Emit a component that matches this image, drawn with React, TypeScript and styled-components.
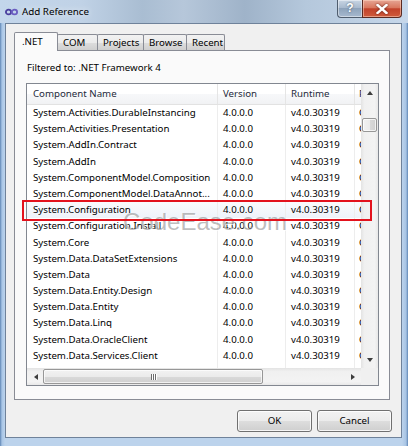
import React from 'react';
import styled, {createGlobalStyle} from 'styled-components';

const GlobalStyle = createGlobalStyle`
    html, body {
        margin: 0;
        padding: 0;
        background: #ffffff;
    }
    body {
        font-family: "Noto Sans", "Liberation Sans", sans-serif;
        font-size: 9.7px;
        color: #000;
    }
`;

const tabs = [
    {label: '.NET', width: 44},
    {label: 'COM', width: 41},
    {label: 'Projects', width: 47},
    {label: 'Browse', width: 44},
    {label: 'Recent', width: 39},
];

const components = [
    'System.Activities.DurableInstancing',
    'System.Activities.Presentation',
    'System.AddIn.Contract',
    'System.AddIn',
    'System.ComponentModel.Composition',
    'System.ComponentModel.DataAnnot...',
    'System.Configuration',
    'System.Configuration.Install',
    'System.Core',
    'System.Data.DataSetExtensions',
    'System.Data',
    'System.Data.Entity.Design',
    'System.Data.Entity',
    'System.Data.Linq',
    'System.Data.OracleClient',
    'System.Data.Services.Client',
    'System.Data.Services.Design',
];

export default function App() {
    return (
        <>
            <GlobalStyle/>
            <Window>
                <TitleBar>
                    <AppIcon width="13" height="8" viewBox="0 0 13 8">
                        <ellipse cx="3.5" cy="4" rx="2.6" ry="2.4" fill="none" stroke="#4b3f9e" strokeWidth="1.8"/>
                        <ellipse cx="9.5" cy="4" rx="2.6" ry="2.4" fill="none" stroke="#6a5cc0" strokeWidth="1.8"/>
                    </AppIcon>
                    <Title>Add Reference</Title>
                    <CaptionButtons>
                        <HelpButton>?</HelpButton>
                        <CloseButton>
                            <svg width="12" height="10" viewBox="0 0 12 10">
                                <path d="M1.5 1 L10.5 9 M10.5 1 L1.5 9" stroke="#fff" strokeWidth="2.4" strokeLinecap="square"/>
                            </svg>
                        </CloseButton>
                    </CaptionButtons>
                </TitleBar>
                <Client>
                    <TabStrip>
                        {tabs.map((t, i) => (
                            <Tab key={t.label} $active={i === 0} $w={t.width}>{t.label}</Tab>
                        ))}
                    </TabStrip>
                    <TabPanel>
                        <FilterLabel>Filtered to: .NET Framework 4</FilterLabel>
                        <ListBox>
                            <Viewport>
                                <HeaderRow>
                                    <HeaderCell $pad={6}>Component Name</HeaderCell>
                                    <HeaderCell $pad={5}>Version</HeaderCell>
                                    <HeaderCell $pad={5}>Runtime</HeaderCell>
                                    <HeaderCell $pad={4}>Path</HeaderCell>
                                </HeaderRow>
                                {components.map((name, i) => (
                                    <Row key={name} $selected={i === 6}>
                                        <Cell $pad={6}>{name}</Cell>
                                        <Cell $pad={5}>4.0.0.0</Cell>
                                        <Cell $pad={5}>v4.0.30319</Cell>
                                        <Cell $pad={4}>C:\Program Files\Reference Assemblies</Cell>
                                    </Row>
                                ))}
                            </Viewport>
                            <VScroll>
                                <ScrollButton><Arrow $dir="up"/></ScrollButton>
                                <VTrack>
                                    <VThumb/>
                                </VTrack>
                                <ScrollButton><Arrow $dir="down"/></ScrollButton>
                            </VScroll>
                            <HScroll>
                                <ScrollButton><Arrow $dir="left"/></ScrollButton>
                                <HTrack>
                                    <HThumb>
                                        <Grip/><Grip/><Grip/>
                                    </HThumb>
                                </HTrack>
                                <ScrollButton><Arrow $dir="right"/></ScrollButton>
                            </HScroll>
                            <Corner/>
                            <Watermark>CodeEase.com</Watermark>
                            <Highlight/>
                        </ListBox>
                    </TabPanel>
                    <ButtonRow>
                        <DialogButton>OK</DialogButton>
                        <DialogButton>Cancel</DialogButton>
                    </ButtonRow>
                </Client>
            </Window>
        </>
    );
}

const Window = styled.div`
    width: 408px;
    height: 446px;
    box-sizing: border-box;
    display: flex;
    flex-direction: column;
    overflow: hidden;
    background: linear-gradient(90deg, #5f86b5 0px, #a9c6e6 2px, #bcd3ec 5px, #bcd3ec 402px, #a8c4e4 406px, #5f86b5 408px);
`;

const TitleBar = styled.div`
    height: 23px;
    flex: none;
    display: flex;
    align-items: center;
    padding-left: 5px;
    padding-right: 6px;
    background: linear-gradient(90deg, #c3d6eb 0%, #c0d2e6 20%, #a9bdd2 35%, #b6c7da 45%, #9fb3c9 60%, #b5c8dc 75%, #c6d7ea 100%);
`;

const AppIcon = styled.svg`
    flex: none;
    margin-top: 1px;
`;

const Title = styled.span`
    margin-left: 4px;
    font-size: 9.8px;
    color: #000;
    text-shadow: 0 0 6px rgba(255, 255, 255, 0.9);
`;

const CaptionButtons = styled.div`
    margin-left: auto;
    align-self: flex-start;
    display: flex;
`;

const HelpButton = styled.div`
    width: 25px;
    height: 18px;
    box-sizing: border-box;
    border: 1px solid #4f5d6e;
    border-top: none;
    border-right: none;
    border-radius: 0 0 0 4px;
    background: linear-gradient(180deg, #c9d6e4 0%, #a9bace 45%, #8ea3bb 50%, #a6b9cf 100%);
    color: #fff;
    font-family: "Liberation Sans", sans-serif;
    font-weight: bold;
    font-size: 12px;
    line-height: 17px;
    text-align: center;
    text-shadow: 0 0 2px #3a4a5c;
    box-shadow: inset 0 0 0 1px rgba(255, 255, 255, 0.45);
`;

const CloseButton = styled.div`
    width: 40px;
    height: 18px;
    box-sizing: border-box;
    border: 1px solid #5a2a22;
    border-top: none;
    border-radius: 0 0 4px 0;
    display: flex;
    align-items: center;
    justify-content: center;
    background: linear-gradient(180deg, #e6a594 0%, #d9785f 45%, #c2422a 52%, #cf5b3c 100%);
    box-shadow: inset 0 0 0 1px rgba(255, 220, 200, 0.5);

    svg {
        filter: drop-shadow(0 0 1px #5a1a10);
    }
`;

const Client = styled.div`
    flex: 1;
    margin: 0 6px 8px 5px;
    border: 1px solid #6f829a;
    background: #f0f0f0;
    display: flex;
    flex-direction: column;
    box-sizing: border-box;
`;

const TabStrip = styled.div`
    display: flex;
    align-items: flex-end;
    height: 18px;
    margin: 8px 0 0 8px;
    position: relative;
    z-index: 1;
`;

const Tab = styled.div<{ $active?: boolean; $w: number }>`
    box-sizing: border-box;
    width: ${p => p.$w}px;
    height: ${p => (p.$active ? 19 : 16)}px;
    margin-bottom: ${p => (p.$active ? -1 : 0)}px;
    padding: ${p => (p.$active ? '2px 0 0 7px' : '1px 0 0 5px')};
    border: 1px solid #898c95;
    border-bottom: ${p => (p.$active ? 'none' : '0')};
    border-radius: 2px 2px 0 0;
    background: ${p => (p.$active ? '#fafafa' : 'linear-gradient(180deg, #f2f2f2 0%, #ebebeb 50%, #dddddd 51%, #cfcfcf 100%)')};
    line-height: 13px;
    white-space: nowrap;
    & + & {
        margin-left: -1px;
    }
`;

const TabPanel = styled.div`
    box-sizing: border-box;
    height: 350px;
    margin: 0 11px 0 8px;
    border: 1px solid #898c95;
    background: #fafafa;
    padding: 10px 11px 0 11px;
`;

const FilterLabel = styled.div`
    height: 14px;
    line-height: 14px;
    padding-left: 1px;
`;

const ListBox = styled.div`
    position: relative;
    box-sizing: border-box;
    margin-top: 8px;
    width: 353px;
    height: 303px;
    border: 1px solid #828790;
    background: #fff;
    display: grid;
    grid-template-columns: 334px 17px;
    grid-template-rows: 284px 17px;
`;

const Viewport = styled.div`
    overflow: hidden;
`;

const columns = '191px 68px 69px 200px';

const HeaderRow = styled.div`
    display: grid;
    grid-template-columns: ${columns};
    height: 20px;
    border-bottom: 1px solid #e2e2e2;
    background: linear-gradient(180deg, #ffffff 0%, #ffffff 50%, #f7f8fa 51%, #f1f2f4 100%);
`;

const HeaderCell = styled.div<{ $pad: number }>`
    padding-left: ${p => p.$pad}px;
    line-height: 20px;
    border-right: 1px solid #e5e5e5;
    color: #1e2a3b;
    white-space: nowrap;
    overflow: hidden;
`;

const Row = styled.div<{ $selected?: boolean }>`
    display: grid;
    grid-template-columns: ${columns};
    height: 16.2px;
    background: ${p => (p.$selected ? 'linear-gradient(180deg, #fafbfd 0%, #eef3fa 100%)' : 'transparent')};
`;

const Cell = styled.div<{ $pad: number }>`
    padding-left: ${p => p.$pad}px;
    line-height: 15.4px;
    border-right: 1px solid #ededed;
    white-space: nowrap;
    overflow: hidden;
`;

const VScroll = styled.div`
    grid-row: 1 / 2;
    grid-column: 2 / 3;
    display: flex;
    flex-direction: column;
    background: linear-gradient(90deg, #e3e3e3 0%, #f0f0f0 20%, #f3f3f3 80%, #e8e8e8 100%);
`;

const HScroll = styled.div`
    grid-row: 2 / 3;
    grid-column: 1 / 2;
    display: flex;
    background: linear-gradient(180deg, #e3e3e3 0%, #f0f0f0 20%, #f3f3f3 80%, #e8e8e8 100%);
`;

const Corner = styled.div`
    background: #f0f0f0;
`;

const ScrollButton = styled.div`
    width: 17px;
    height: 17px;
    flex: none;
    display: flex;
    align-items: center;
    justify-content: center;
`;

const Arrow = styled.div<{ $dir: 'up' | 'down' | 'left' | 'right' }>`
    width: 0;
    height: 0;
    ${p => {
        switch (p.$dir) {
            case 'up':
                return 'border-left: 3.5px solid transparent; border-right: 3.5px solid transparent; border-bottom: 4px solid #3d3d3d;';
            case 'down':
                return 'border-left: 3.5px solid transparent; border-right: 3.5px solid transparent; border-top: 4px solid #3d3d3d;';
            case 'left':
                return 'border-top: 3.5px solid transparent; border-bottom: 3.5px solid transparent; border-right: 4px solid #3d3d3d;';
            default:
                return 'border-top: 3.5px solid transparent; border-bottom: 3.5px solid transparent; border-left: 4px solid #3d3d3d;';
        }
    }}
`;

const VTrack = styled.div`
    flex: 1;
    padding: 17px 1px 0 1px;
`;

const VThumb = styled.div`
    height: 14px;
    box-sizing: border-box;
    border: 1px solid #979797;
    border-radius: 2px;
    background: linear-gradient(90deg, #f2f2f2 0%, #ebebeb 50%, #d9d9d9 51%, #d0d0d0 100%);
    box-shadow: inset 0 0 0 1px rgba(255, 255, 255, 0.7);
`;

const HTrack = styled.div`
    flex: 1;
    padding: 1px 0;
    display: flex;
    margin-left: -1px;
`;

const HThumb = styled.div`
    width: 220px;
    box-sizing: border-box;
    border: 1px solid #979797;
    border-radius: 2px;
    background: linear-gradient(180deg, #f2f2f2 0%, #ebebeb 50%, #d9d9d9 51%, #d0d0d0 100%);
    box-shadow: inset 0 0 0 1px rgba(255, 255, 255, 0.7);
    display: flex;
    align-items: center;
    justify-content: center;
    gap: 1px;
`;

const Grip = styled.div`
    width: 1px;
    height: 6px;
    background: #6d6d6d;
    box-shadow: 1px 0 0 #fff;
`;

const Watermark = styled.div`
    position: absolute;
    left: 96px;
    top: 124px;
    font-family: "Liberation Sans", sans-serif;
    font-size: 24px;
    line-height: 28px;
    color: rgba(125, 125, 125, 0.5);
    text-shadow: 1px 1px 0 rgba(255, 255, 255, 0.7);
    pointer-events: none;
    white-space: nowrap;
`;

const Highlight = styled.div`
    position: absolute;
    left: -5px;
    top: 116px;
    width: 350px;
    height: 21px;
    box-sizing: border-box;
    border: 2px solid #e3121d;
    pointer-events: none;
`;

const ButtonRow = styled.div`
    display: flex;
    justify-content: flex-end;
    gap: 5px;
    margin-top: 10px;
    padding-right: 9px;
`;

const DialogButton = styled.div`
    width: 75px;
    height: 22px;
    box-sizing: border-box;
    border: 1px solid #707070;
    border-radius: 3px;
    background: linear-gradient(180deg, #f2f2f2 0%, #ebebeb 50%, #dddddd 51%, #cfcfcf 100%);
    box-shadow: inset 0 0 0 1px rgba(255, 255, 255, 0.8);
    text-align: center;
    line-height: 20px;
`;
